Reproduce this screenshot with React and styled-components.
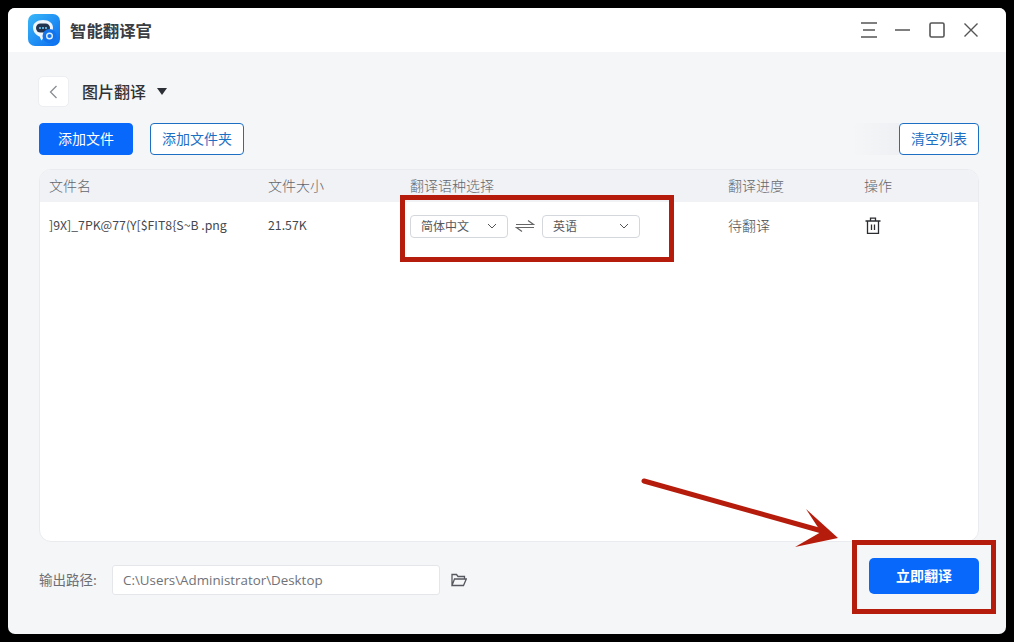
import React from 'react';
import styled, { createGlobalStyle } from 'styled-components';

const GlobalStyle = createGlobalStyle`
    html, body {
        margin: 0;
        padding: 0;
        background: #000;
    }
    body {
        font-family: "Noto Sans CJK SC", "Noto Sans", sans-serif;
    }
    * {
        box-sizing: border-box;
    }
`;

const Logo = () => (
    <svg width="32" height="32" viewBox="0 0 32 32">
        <defs>
            <linearGradient id="logoBg" x1="0" y1="0" x2="1" y2="1">
                <stop offset="0" stopColor="#3ab8f8" />
                <stop offset="1" stopColor="#0a6cf0" />
            </linearGradient>
        </defs>
        <rect width="32" height="32" rx="7" fill="url(#logoBg)" />
        <path d="M15 6c6 0 10 3.400 10 7.500 0 1-.2 2-.6 3-3.500 0-6.400 2.600-7 6.500-.6.100-1.300.1-1.900.1-.4 1.300-1 2.400-2 3.400-.5-1.100-1-2-1.700-3.800C8 21.200 5 17.800 5 13.500 5 9.400 9 6 15 6z" fill="#eef5fc" />
        <rect x="8" y="9.500" width="14" height="9" rx="4.500" fill="#24344f" />
        <circle cx="12" cy="14" r="1" fill="#6fd0ff" />
        <circle cx="15" cy="14" r="1" fill="#6fd0ff" />
        <circle cx="18" cy="14" r="1" fill="#6fd0ff" />
        <circle cx="21.500" cy="22" r="7" fill="#1274ec" />
        <circle cx="21.500" cy="22" r="2.800" fill="none" stroke="#dff0ff" strokeWidth="1.400" />
    </svg>
);

const MenuIcon = () => (
    <svg width="16" height="16" viewBox="0 0 16 16" fill="none" stroke="#555" strokeWidth="1.500">
        <path d="M0 1h16M2 8h12M0 15h16" />
    </svg>
);

const MinIcon = () => (
    <svg width="16" height="16" viewBox="0 0 16 16" fill="none" stroke="#555" strokeWidth="1.500">
        <path d="M0 8h15" />
    </svg>
);

const MaxIcon = () => (
    <svg width="16" height="16" viewBox="0 0 16 16" fill="none" stroke="#555" strokeWidth="1.600">
        <rect x="1" y="1" width="14" height="14" rx="1.500" />
    </svg>
);

const CloseIcon = () => (
    <svg width="16" height="16" viewBox="0 0 16 16" fill="none" stroke="#555" strokeWidth="1.400">
        <path d="M1.500 1.500l13 13M14.500 1.500l-13 13" />
    </svg>
);

const BackIcon = () => (
    <svg width="9" height="14" viewBox="0 0 9 14" fill="none" stroke="#8a8d93" strokeWidth="1.300">
        <path d="M7.500 1L1.500 7l6 6" />
    </svg>
);

const Chevron = () => (
    <svg width="10" height="6" viewBox="0 0 10 6" fill="none" stroke="#555" strokeWidth="1">
        <path d="M1 1l4 4 4-4" />
    </svg>
);

const SwapIcon = () => (
    <svg width="20" height="14" viewBox="0 0 20 14" fill="none" stroke="#666" strokeWidth="1.200">
        <path d="M1 5.500h17.500L13 1.500M19 8.500H1.500L7 12.500" />
    </svg>
);

const TrashIcon = () => (
    <svg width="16" height="18" viewBox="0 0 16 18" fill="none" stroke="#2b2d31" strokeWidth="1.300">
        <path d="M.5 4h15M5.500 4V1.200h5V4M2.500 4v12.300h11V4M6.500 7.500v5.500M9.500 7.500v5.500" />
    </svg>
);

const FolderIcon = () => (
    <svg width="16" height="14" viewBox="0 0 16 14" fill="none" stroke="#55585e" strokeWidth="1.300">
        <path d="M1 12.500V1.500h4.500l1.500 2h6.500v2.500M1 12.500h11.500L15.300 6H3.500L1 12.500z" />
    </svg>
);

const App = () => {
    return (
        <>
            <GlobalStyle />
            <Frame>
                <Window>
                    <TitleBar>
                        <Logo />
                        <AppName>智能翻译官</AppName>
                        <WindowControls>
                            <MenuIcon />
                            <MinIcon />
                            <MaxIcon />
                            <CloseIcon />
                        </WindowControls>
                    </TitleBar>
                    <Content>
                        <PageHead>
                            <BackButton><BackIcon /></BackButton>
                            <PageTitle>图片翻译</PageTitle>
                            <Caret />
                        </PageHead>
                        <Toolbar>
                            <Button $primary>添加文件</Button>
                            <Button>添加文件夹</Button>
                            <Fade />
                            <Button $narrow>清空列表</Button>
                        </Toolbar>
                        <Table>
                            <HeadRow>
                                <span>文件名</span>
                                <span>文件大小</span>
                                <span>翻译语种选择</span>
                                <span>翻译进度</span>
                                <span>操作</span>
                            </HeadRow>
                            <BodyRow>
                                <FileText>]9X]_7PK@77(Y[$FIT8{'{'}S~B .png</FileText>
                                <FileText>21.57K</FileText>
                                <LangCell>
                                    <Select>简体中文<Chevron /></Select>
                                    <SwapIcon />
                                    <Select>英语<Chevron /></Select>
                                </LangCell>
                                <StatusText>待翻译</StatusText>
                                <TrashWrap><TrashIcon /></TrashWrap>
                            </BodyRow>
                        </Table>
                        <Footer>
                            <PathGroup>
                                <PathLabel>输出路径:</PathLabel>
                                <PathInput>C:\Users\Administrator\Desktop</PathInput>
                                <FolderIcon />
                            </PathGroup>
                            <RunButton>立即翻译</RunButton>
                        </Footer>
                    </Content>
                </Window>
                <RedBox $x={400} $y={195} $w={274} $h={67} />
                <RedBox $x={852} $y={540} $w={144} $h={74} />
                <Arrow width="1014" height="642" viewBox="0 0 1014 642">
                    <path d="M644 481L822 531" stroke="#b51c0c" strokeWidth="5" strokeLinecap="round" fill="none" />
                    <path d="M806 509L838 538L795 547L821 532z" fill="#b51c0c" />
                </Arrow>
            </Frame>
        </>
    );
}

const Frame = styled.div`
    position: relative;
    width: 1014px;
    height: 642px;
    padding: 8px 8px 8px 8px;
    background: #000;
`;

const Window = styled.div`
    width: 998px;
    height: 626px;
    display: flex;
    flex-direction: column;
    background: #f5f6f8;
    border-radius: 7px;
    overflow: hidden;
`;

const TitleBar = styled.div`
    height: 44px;
    flex-shrink: 0;
    display: flex;
    align-items: center;
    padding: 0 27px 0 20px;
    background: #fff;
`;

const AppName = styled.div`
    margin-left: 10px;
    padding-bottom: 1px;
    font-size: 16.4px;
    font-weight: 700;
    color: #3a3d42;
`;

const WindowControls = styled.div`
    margin-left: auto;
    display: flex;
    align-items: center;
    gap: 18px;
`;

const Content = styled.div`
    flex: 1;
    min-height: 0;
    display: flex;
    flex-direction: column;
    padding: 24px 27px 39px 30px;
`;

const PageHead = styled.div`
    display: flex;
    align-items: center;
    height: 31px;
`;

const BackButton = styled.div`
    width: 31px;
    height: 31px;
    display: flex;
    align-items: center;
    justify-content: center;
    background: #fff;
    border: 1px solid #eceef1;
    border-radius: 5px;
`;

const PageTitle = styled.div`
    margin-left: 13px;
    padding-bottom: 2px;
    font-size: 16px;
    font-weight: 500;
    color: #303236;
`;

const Caret = styled.div`
    margin-left: 11px;
    width: 0;
    height: 0;
    border-left: 5px solid transparent;
    border-right: 5px solid transparent;
    border-top: 7px solid #2c2f35;
`;

const Toolbar = styled.div`
    margin: 16px 0 14px 1px;
    display: flex;
    align-items: center;
    gap: 17px;
`;

const Button = styled.div`
    width: ${props => (props.$narrow ? '80px' : '94px')};
    height: 32px;
    display: flex;
    align-items: center;
    justify-content: center;
    padding-bottom: 3px;
    font-size: 14px;
    border-radius: 4px;
    border: 1px solid ${props => (props.$primary ? '#0768fb' : '#1d6fc4')};
    background: ${props => (props.$primary ? '#0768fb' : '#fff')};
    color: ${props => (props.$primary ? '#fff' : '#1d6fc4')};
`;

const Fade = styled.div`
    margin: 0 -17px 0 auto;
    width: 48px;
    height: 32px;
    background: linear-gradient(to right, #f5f6f8, #eef0f3);
`;

const Table = styled.div`
    flex: 1;
    min-height: 0;
    margin-left: 1px;
    background: #fff;
    border: 1px solid #e9ebef;
    border-radius: 12px;
    overflow: hidden;
`;

const columns = '219px 142px 318px 136px 1fr';

const HeadRow = styled.div`
    height: 32px;
    display: grid;
    grid-template-columns: ${columns};
    align-items: center;
    padding: 0 0 3px 9px;
    background: #f1f2f6;
    font-size: 14px;
    font-weight: 300;
    color: #63666c;
`;

const BodyRow = styled.div`
    height: 48px;
    display: grid;
    grid-template-columns: ${columns};
    align-items: center;
    padding-left: 9px;
    color: #45484d;
`;

const FileText = styled.span`
    padding-bottom: 2px;
    font-size: 12.3px;
`;

const StatusText = styled.span`
    padding-bottom: 3px;
    font-size: 14px;
    font-weight: 300;
`;

const LangCell = styled.div`
    display: flex;
    align-items: center;
    gap: 7px;
`;

const Select = styled.div`
    width: 98px;
    height: 23px;
    display: flex;
    align-items: center;
    justify-content: space-between;
    padding: 0 10px 1px 10px;
    font-size: 12px;
    color: #55585d;
    background: #fff;
    border: 1px solid #d4d7dc;
    border-radius: 4px;
`;

const TrashWrap = styled.div`
    display: flex;
    align-items: center;
    padding-left: 1px;
`;

const Footer = styled.div`
    margin: 16px 0 0 1px;
    height: 37px;
    display: flex;
    align-items: flex-end;
`;

const PathGroup = styled.div`
    display: flex;
    align-items: center;
`;

const PathLabel = styled.div`
    width: 73px;
    padding-bottom: 2px;
    font-size: 13.5px;
    color: #6b6e74;
`;

const PathInput = styled.div`
    width: 328px;
    height: 30px;
    margin-right: 11px;
    display: flex;
    align-items: center;
    padding-left: 10px;
    font-family: "Open Sans", "Noto Sans", sans-serif;
    font-size: 13.35px;
    color: #6f7278;
    background: #fff;
    border: 1px solid #e4e6ea;
    border-radius: 3px;
`;

const RunButton = styled.div`
    margin: 0 0 1px auto;
    width: 110px;
    height: 36px;
    display: flex;
    align-items: center;
    justify-content: center;
    padding-bottom: 2px;
    font-size: 14px;
    font-weight: 700;
    color: #fff;
    background: #0768fb;
    border-radius: 5px;
`;

const RedBox = styled.div`
    position: absolute;
    left: ${props => props.$x}px;
    top: ${props => props.$y}px;
    width: ${props => props.$w}px;
    height: ${props => props.$h}px;
    border: 5px solid #b51c0c;
`;

const Arrow = styled.svg`
    position: absolute;
    left: 0;
    top: 0;
    pointer-events: none;
`;

export default App;
